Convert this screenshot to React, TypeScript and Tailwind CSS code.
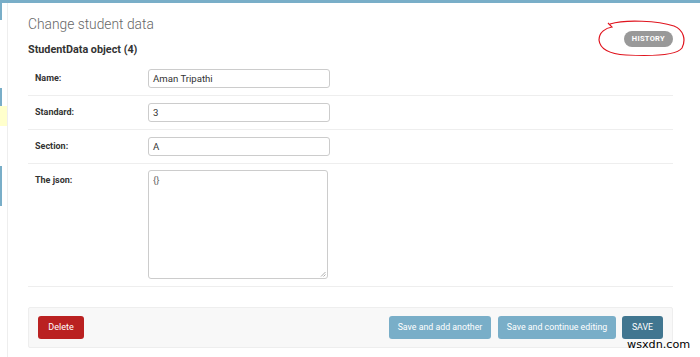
import React from "react";

const rows = [
  { label: "Name:", value: "Aman Tripathi" },
  { label: "Standard:", value: "3" },
  { label: "Section:", value: "A" },
];

export default function App() {
  return (
    <div className="relative w-[700px] h-[357px] overflow-hidden bg-white" style={{ fontFamily: "Roboto, 'Liberation Sans', sans-serif" }}>
      <div className="h-[3px] bg-[#79aec8]" />
      <div className="flex h-[354px]">
        <div className="w-[8px] border-r border-[#eeeeee] flex flex-col shrink-0">
          <div className="h-[17px] w-[2px] bg-[#79aec8]" />
          <div className="h-[68px]" />
          <div className="h-[18px] w-[2px] bg-[#79aec8]" />
          <div className="h-[20px] bg-[#ffffcc]" />
          <div className="h-[40px]" />
          <div className="h-[40px] w-[2px] bg-[#79aec8]" />
        </div>
        <div className="flex-1 pl-[20px] pr-[27px]">
          <div className="flex items-start justify-between">
            <h1 className="text-[13.8px] font-light text-[#666] leading-[20px] mt-[11px]">Change student data</h1>
            <button className="mt-[28px] h-[16px] px-[8px] rounded-full bg-[#999] text-white text-[7.5px] font-bold tracking-[0.3px] leading-[16px]">HISTORY</button>
          </div>
          <h2 className="text-[10.8px] font-bold text-[#333] leading-[16px] -mt-[5px]">StudentData object (4)</h2>
          <div className="mt-[4px]">
            {rows.map((r) => (
              <div key={r.label} className="flex items-center py-[7px] border-b border-[#eeeeee]">
                <label className="w-[120px] pl-[7px] text-[9px] font-bold text-[#333]">{r.label}</label>
                <div className="w-[182px] h-[19px] border border-[#cccccc] rounded-[3px] px-[4px] text-[9.6px] leading-[17px] text-[#333]">{r.value}</div>
              </div>
            ))}
            <div className="flex items-start pt-[6px] pb-[7px] border-b border-[#eeeeee]">
              <label className="w-[120px] pl-[7px] text-[9px] font-bold text-[#333] leading-[20px]">The json:</label>
              <div className="relative w-[180px] h-[109px] border border-[#cccccc] rounded-[3px] px-[4px] pt-[3px] text-[9.6px] leading-[12px] text-[#666]">
                {"{}"}
                <svg className="absolute right-[1px] bottom-[1px]" width="6" height="6" viewBox="0 0 6 6">
                  <path d="M5.5 1 L1 5.5 M5.5 3.5 L3.5 5.5" stroke="#999" strokeWidth="0.8" />
                </svg>
              </div>
            </div>
          </div>
          <div className="mt-[20px] h-[41px] border border-[#eeeeee] bg-[#f8f8f8] rounded-[2px] flex items-center px-[9px]">
            <button className="h-[23px] w-[46px] rounded-[3px] bg-[#ba2121] text-white text-[9px]">Delete</button>
            <div className="flex-1" />
            <button className="h-[23px] w-[102px] rounded-[3px] bg-[#79aec8] text-white text-[8.8px]">Save and add another</button>
            <button className="h-[23px] w-[118px] ml-[7px] rounded-[3px] bg-[#79aec8] text-white text-[8.8px]">Save and continue editing</button>
            <button className="h-[23px] w-[41px] ml-[6px] rounded-[3px] bg-[#417690] text-white text-[8.8px]">SAVE</button>
          </div>
        </div>
      </div>
      <svg className="absolute left-[596px] top-[20px]" width="94" height="40" viewBox="0 0 94 40">
        <path d="M14 4 C 30 -1, 62 1, 78 6 C 88 10, 90 20, 86 28 C 80 36, 50 36, 30 35 C 14 34, 4 30, 3 20 C 3 12, 10 8, 16 7 L 12 3" fill="none" stroke="#e0141e" strokeWidth="1.2" />
      </svg>
      <div className="absolute left-[627px] top-[338px] text-[11.2px] text-black leading-[14px]" style={{ fontFamily: "'DejaVu Sans', sans-serif" }}>wsxdn.com</div>
    </div>
  );
}
